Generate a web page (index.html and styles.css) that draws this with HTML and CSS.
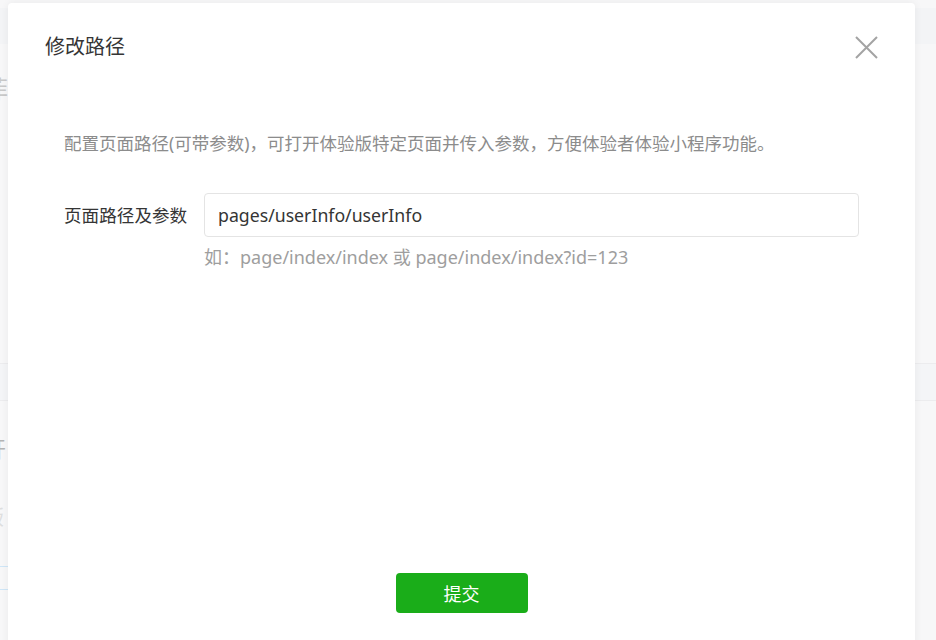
FILE: index.html
```html
<!DOCTYPE html>
<html lang="zh-CN">
<head>
<meta charset="utf-8">
<title>修改路径</title>
<link rel="stylesheet" href="styles.css">
</head>
<body>
<div class="bg">
  <div class="bg-bar"></div>
  <div class="bg-col">
    <div class="bg-h1">菲</div>
    <div class="bg-band"></div>
    <div class="bg-h2">开</div>
    <div class="bg-t1">版</div>
    <div class="bg-t2">y</div>
    <div class="bg-tag">本</div>
  </div>
</div>

<div class="modal">
  <div class="modal-head">
    <div class="modal-title">修改路径</div>
    <div class="modal-close">
      <svg width="23" height="23" viewBox="0 0 23 23"><path d="M1 1L22 22M22 1L1 22" stroke="#a3a3a3" stroke-width="2" fill="none"/></svg>
    </div>
  </div>
  <div class="modal-body">
    <p class="desc">配置页面路径(可带参数)，可打开体验版特定页面并传入参数，方便体验者体验小程序功能。</p>
    <div class="form-row">
      <label class="form-label">页面路径及参数</label>
      <div class="form-field">
        <div class="input">pages/userInfo/userInfo</div>
        <div class="hint">如：page/index/index 或 page/index/index?id=123</div>
      </div>
    </div>
  </div>
  <div class="modal-foot">
    <button class="btn-primary">提交</button>
  </div>
</div>
</body>
</html>
```

FILE: styles.css
```css
html, body {
  margin: 0;
  padding: 0;
}
body {
  width: 936px;
  height: 640px;
  overflow: hidden;
  background: #f7f7f8;
  font-family: "Noto Sans", "Noto Sans CJK SC", sans-serif;
  position: relative;
}

/* background page (behind the dialog) */
.bg {
  display: flex;
  flex-direction: column;
  padding-top: 8px;
}
.bg-bar {
  height: 36px;
  background: #f3f4f6;
}
.bg-col {
  display: flex;
  flex-direction: column;
  margin-left: -16px;
}
.bg-h1 {
  margin-top: 30px;
  font-size: 24px;
  line-height: 30px;
  color: #c9c9c9;
}
.bg-band {
  margin-top: 259px;
  margin-left: 16px;
  height: 36px;
  width: 936px;
  background: #f4f5f7;
  border-top: 1px solid #ececee;
  border-bottom: 1px solid #ececee;
}
.bg-h2 {
  margin-top: 33px;
  font-size: 22px;
  line-height: 28px;
  color: #b4b4b4;
}
.bg-t1 {
  margin-top: 44px;
  font-size: 20px;
  line-height: 24px;
  color: #dedede;
}
.bg-t2 {
  margin-top: 4px;
  margin-left: 4px;
  font-size: 18px;
  line-height: 24px;
  color: #9a9a9a;
}
.bg-tag {
  margin-top: 8px;
  width: 40px;
  height: 22px;
  line-height: 22px;
  font-size: 14px;
  text-align: right;
  color: #8cc4ec;
  border-top: 1px solid #cfe6f7;
  border-bottom: 1px solid #cfe6f7;
}

/* dialog */
.modal {
  position: absolute;
  left: 8px;
  top: 3px;
  width: 907px;
  height: 660px;
  background: #fff;
  border-radius: 4px;
  box-shadow: 0 0 8px rgba(0, 0, 0, 0.06);
  display: flex;
  flex-direction: column;
}
.modal-head {
  display: flex;
  align-items: center;
  justify-content: space-between;
  padding: 30px 37px 0 37px;
}
.modal-title {
  font-size: 20px;
  line-height: 28px;
  color: #353535;
}
.modal-close {
  width: 23px;
  height: 23px;
  display: flex;
}
.modal-body {
  padding: 0 56px;
}
.desc {
  margin: 70px 0 0 0;
  font-size: 17.5px;
  line-height: 24px;
  color: #8c8c8c;
}
.form-row {
  display: flex;
  margin-top: 38px;
}
.form-label {
  width: 140px;
  flex: none;
  height: 44px;
  line-height: 44px;
  font-size: 17.6px;
  color: #353535;
}
.form-field {
  display: flex;
  flex-direction: column;
}
.input {
  box-sizing: border-box;
  width: 655px;
  height: 44px;
  line-height: 42px;
  padding: 0 13px;
  border: 1px solid #e4e4e4;
  border-radius: 4px;
  font-size: 17.7px;
  color: #353535;
}
.hint {
  margin-top: 8px;
  font-size: 18px;
  line-height: 24px;
  color: #9e9e9e;
}
.modal-foot {
  margin-top: auto;
  padding-bottom: 50px;
  display: flex;
  justify-content: center;
}
.btn-primary {
  width: 132px;
  height: 40px;
  border: 0;
  border-radius: 4px;
  background: #1aad19;
  color: #fff;
  font-family: "Noto Sans", "Noto Sans CJK SC", sans-serif;
  font-size: 18px;
  padding: 0;
}
```
